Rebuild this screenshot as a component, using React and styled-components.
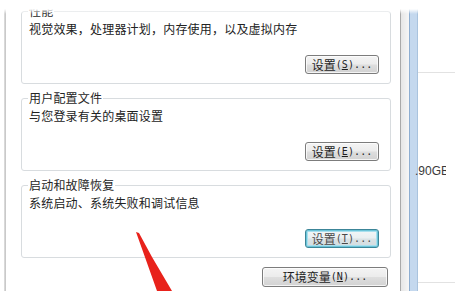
import React from "react";
import styled, { createGlobalStyle, css } from "styled-components";

const Global = createGlobalStyle`
  html, body { margin: 0; padding: 0; background: #fff; }
  body {
    width: 455px;
    height: 291px;
    overflow: hidden;
    font-family: "Noto Sans CJK SC", "Noto Sans", sans-serif;
  }
`;

const Page = styled.div`
  position: relative;
  display: flex;
  width: 455px;
  height: 291px;
  overflow: hidden;
  background: #fff;
`;

const LeftRule = styled.div`
  flex: none;
  width: 2px;
  margin-left: 4px;
  background: linear-gradient(to right, #e0e0e0, #c2c2c2);
`;

const Content = styled.main`
  flex: none;
  box-sizing: border-box;
  width: 370px;
  margin-left: 15px;
  padding-top: 11px;
  display: flex;
  flex-direction: column;
`;

const GroupBox = styled.section`
  box-sizing: border-box;
  height: 73px;
  border: 1px solid #d8dcdf;
  border-radius: 3px;
  padding: 0 11px 9px 6px;
  display: flex;
  flex-direction: column;
  & + & { margin-top: 14px; }
`;

const Legend = styled.h3`
  margin: -8px 0 0 0;
  align-self: flex-start;
  padding: 0 1px;
  background: #fff;
  font: 400 12px/14px "Noto Sans CJK SC", sans-serif;
  letter-spacing: 0.2px;
  color: #262626;
`;

const Description = styled.p`
  margin: 4px 0 0 0;
  padding-left: 1px;
  font: 400 12px/14px "Noto Sans CJK SC", sans-serif;
  letter-spacing: 0.2px;
  color: #222;
  white-space: nowrap;
`;

const Button = styled.button`
  box-sizing: border-box;
  margin-top: auto;
  align-self: flex-end;
  width: ${(p) => p.$w || 74}px;
  height: ${(p) => p.$h || 19}px;
  padding: 0;
  border: 1px solid #7c7c7c;
  border-radius: 3px;
  background: linear-gradient(#f4f4f4 0%, #ececec 48%, #dedede 52%, #d2d2d2 100%);
  box-shadow: inset 0 0 0 1px rgba(255, 255, 255, 0.75);
  font: 400 12px/1 "Noto Sans CJK SC", sans-serif;
  color: #1e1e1e;
  display: flex;
  align-items: center;
  justify-content: center;
  ${(p) =>
    p.$focused &&
    css`
      border-color: #3c8598;
      box-shadow: inset 0 0 0 1px #6cc4d8, inset 0 0 0 2px #a9e0ee;
      background: linear-gradient(#f3f7f8 0%, #e9eff1 48%, #dbe3e6 52%, #d3dcdf 100%);
      color: #4a4a4a;
    `}
`;

const EnvButton = styled(Button)`
  margin-top: 9px;
  margin-right: 3px;
`;

const Latin = styled.span`
  font-family: "DejaVu Sans Mono", "Liberation Mono", monospace;
  font-size: 10px;
  letter-spacing: 0.1px;
`;

const RightRule = styled.div`
  flex: none;
  width: 1px;
  margin-left: 9px;
  background: #a9a9a9;
`;

const Track = styled.div`
  flex: none;
  width: 8px;
  background: linear-gradient(to right, #e6e6e6, #f6f6f6);
`;

const BlueBar = styled.div`
  flex: none;
  box-sizing: border-box;
  width: 9px;
  border-left: 1px solid #8eaed1;
  border-right: 1px solid #a9c3de;
  background: #c4d8ee;
`;

const RightPane = styled.aside`
  flex: 1;
  display: flex;
  flex-direction: column;
  padding-top: 72px;
`;

const Divider = styled.div`
  height: 1px;
  background: #e2e2e2;
  margin-top: ${(p) => p.$mt || 0}px;
`;

const Value = styled.div`
  margin: 91px 0 0 -3px;
  width: 31px;
  overflow: hidden;
  white-space: nowrap;
  font: 400 12px/14px "Liberation Sans", Arial, sans-serif;
  color: #3a3a3a;
`;

const TopFade = styled.div`
  position: absolute;
  left: 0;
  top: 0;
  width: 100%;
  height: 14px;
  background: linear-gradient(#fff 0px, #fff 9px, rgba(255, 255, 255, 0) 14px);
  pointer-events: none;
`;

const ArrowLayer = styled.svg`
  position: absolute;
  left: 0;
  top: 0;
  pointer-events: none;
`;

const groups = [
  { title: "性能", text: "视觉效果，处理器计划，内存使用，以及虚拟内存", key: "S" },
  { title: "用户配置文件", text: "与您登录有关的桌面设置", key: "E" },
  { title: "启动和故障恢复", text: "系统启动、系统失败和调试信息", key: "T", focused: true },
];

export default function App() {
  return (
    <>
      <Global />
      <Page>
        <LeftRule />
        <Content>
          {groups.map((g) => (
            <GroupBox key={g.title}>
              <Legend>{g.title}</Legend>
              <Description>{g.text}</Description>
              <Button $focused={g.focused}>
                设置<Latin>(<u>{g.key}</u>)...</Latin>
              </Button>
            </GroupBox>
          ))}
          <EnvButton $w={126} $h={20}>
            环境变量<Latin>(<u>N</u>)...</Latin>
          </EnvButton>
        </Content>
        <RightRule />
        <Track />
        <BlueBar />
        <RightPane>
          <Divider />
          <Value>.90GB</Value>
          <Divider $mt={104} />
        </RightPane>
        <TopFade />
        <ArrowLayer width="455" height="291" viewBox="0 0 455 291">
          <polygon points="136,232 139,233 152,257 172,291 157,291" fill="#e8221b" />
        </ArrowLayer>
      </Page>
    </>
  );
}
